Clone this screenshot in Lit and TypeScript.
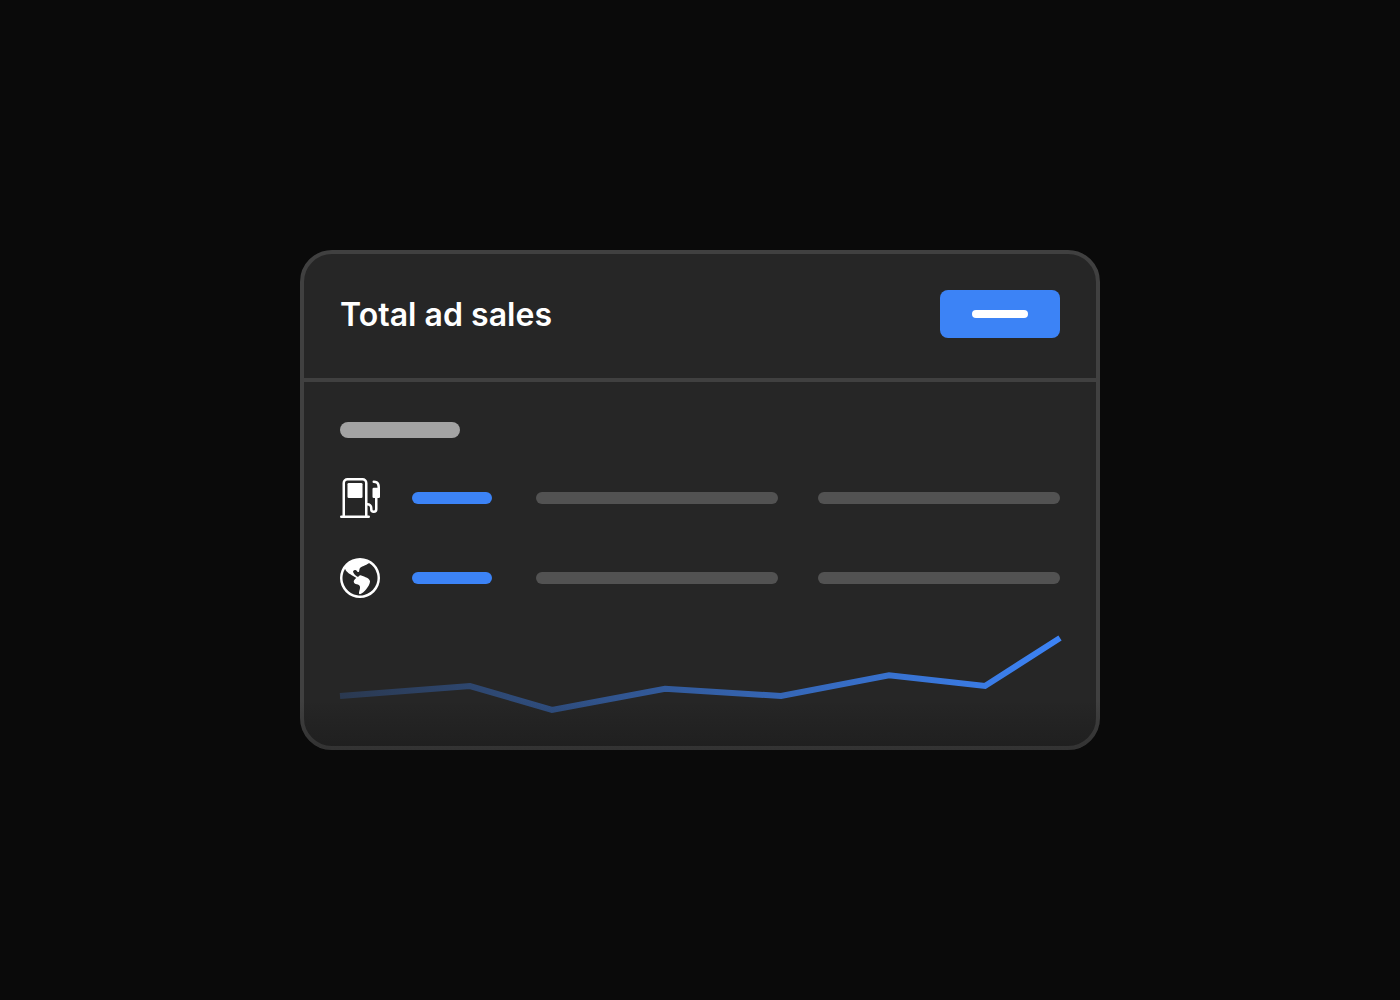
import { LitElement, html, css, svg } from "lit";
import { customElement } from "lit/decorators.js";

const fuelPump = svg`
  <path d="M3 2.5a.5.5 0 0 1 .5-.5h5a.5.5 0 0 1 .5.5v5a.5.5 0 0 1-.5.5h-5a.5.5 0 0 1-.5-.5z"/>
  <path d="M1 2a2 2 0 0 1 2-2h6a2 2 0 0 1 2 2v8a2 2 0 0 1 2 2v.5a.5.5 0 0 0 1 0V8h-.5a.5.5 0 0 1-.5-.5V4.375a.5.5 0 0 1 .5-.5h1.495c-.011-.476-.053-.894-.201-1.222a.97.97 0 0 0-.394-.458c-.184-.11-.464-.195-.9-.195a.5.5 0 0 1 0-1q.846-.002 1.412.336c.383.228.634.551.794.907.295.655.294 1.465.294 2.081V7.5a.5.5 0 0 1-.5.5H15v4.5a1.5 1.5 0 0 1-3 0V12a1 1 0 0 0-1-1v4h.5a.5.5 0 0 1 0 1H.5a.5.5 0 0 1 0-1H1zm9 0a1 1 0 0 0-1-1H3a1 1 0 0 0-1 1v13h8z"/>`;

const globe = svg`
  <path d="M8 0a8 8 0 1 0 0 16A8 8 0 0 0 8 0M2.04 4.326c.325 1.329 2.532 2.54 3.717 3.19.48.263.793.434.743.484q-.121.12-.242.234c-.416.396-.787.749-.758 1.266.035.634.618.824 1.214 1.017.577.188 1.168.38 1.286.983.082.417-.075.988-.22 1.52-.215.782-.406 1.48.22 1.48 1.5-.5 3.798-3.186 4-5 .138-1.243-2-2-3.5-2.5-.478-.16-.755.081-.99.284-.172.15-.322.279-.51.216-.445-.148-2.5-2-1.5-2.5.78-.39.952-.171 1.227.182.078.099.163.208.273.318.609.304.662-.132.723-.633.039-.322.081-.671.277-.867.434-.434 1.265-.791 2.028-1.12.712-.306 1.365-.587 1.579-.88A7 7 0 1 1 2.04 4.327Z"/>`;

@customElement("app-root")
export class AppRoot extends LitElement {
  static styles = css`
    :host {
      display: flex;
      align-items: center;
      justify-content: center;
      height: 100vh;
      background: #0a0a0a;
    }
    .card {
      position: relative;
      box-sizing: border-box;
      width: 800px;
      height: 500px;
      border: 4px solid #404040;
      border-radius: 32px;
      background: #262626;
    }
    .header {
      display: flex;
      justify-content: space-between;
      align-items: flex-start;
      padding: 36px 36px 40px;
      border-bottom: 4px solid #404040;
    }
    .title {
      height: 48px;
      margin: 0;
      font: 600 32px/50px Inter, sans-serif;
      letter-spacing: 0.03px;
      color: #fff;
    }
    .button {
      display: flex;
      align-items: center;
      justify-content: center;
      width: 120px;
      height: 48px;
      border-radius: 8px;
      background: #3c83f6;
    }
    .button-label {
      width: 56px;
      height: 8px;
      border-radius: 4px;
      background: #fff;
    }
    .body {
      display: flex;
      flex-direction: column;
      gap: 40px;
      padding: 40px 36px 0;
    }
    .caption {
      width: 120px;
      height: 16px;
      border-radius: 8px;
      background: #a3a3a3;
    }
    .row {
      display: grid;
      grid-template-columns: 40px 92px 250px 242px;
      column-gap: 32px;
      align-items: center;
    }
    .icon {
      display: block;
      width: 40px;
      height: 40px;
      fill: #fff;
    }
    .bar {
      height: 12px;
      border-radius: 6px;
      background: #525252;
      width: 242px;
    }
    .accent {
      width: 80px;
      background: #3c83f6;
    }
    .chart {
      display: block;
      width: 720px;
      height: 80px;
      margin-top: -4px;
      overflow: visible;
    }
    .shade {
      position: absolute;
      inset: auto -4px -4px;
      height: 50px;
      border-radius: 0 0 32px 32px;
      background: linear-gradient(rgba(10, 10, 10, 0), rgba(10, 10, 10, 0.25));
    }
  `;

  private row(icon: unknown) {
    return html`<div class="row">
      <svg class="icon" viewBox="0 0 16 16">${icon}</svg>
      <div class="bar accent"></div>
      <div class="bar"></div>
      <div class="bar"></div>
    </div>`;
  }

  render() {
    return html`<section class="card">
      <header class="header">
        <h1 class="title">Total ad sales</h1>
        <div class="button"><span class="button-label"></span></div>
      </header>
      <div class="body">
        <div class="caption"></div>
        ${this.row(fuelPump)} ${this.row(globe)}
        <svg class="chart" viewBox="0 0 720 80">
          <defs>
            <linearGradient id="fade" gradientUnits="userSpaceOnUse" x1="720" y1="0" x2="0" y2="0">
              <stop stop-color="#3c83f6" />
              <stop offset="1" stop-color="#3c83f6" stop-opacity="0.2" />
            </linearGradient>
          </defs>
          <polyline points="0,62 130,52 212,76 325,54.8 441,62 549,41.3 645,52 720,4"
            fill="none" stroke="url(#fade)" stroke-width="6" />
        </svg>
      </div>
      <div class="shade"></div>
    </section>`;
  }
}
